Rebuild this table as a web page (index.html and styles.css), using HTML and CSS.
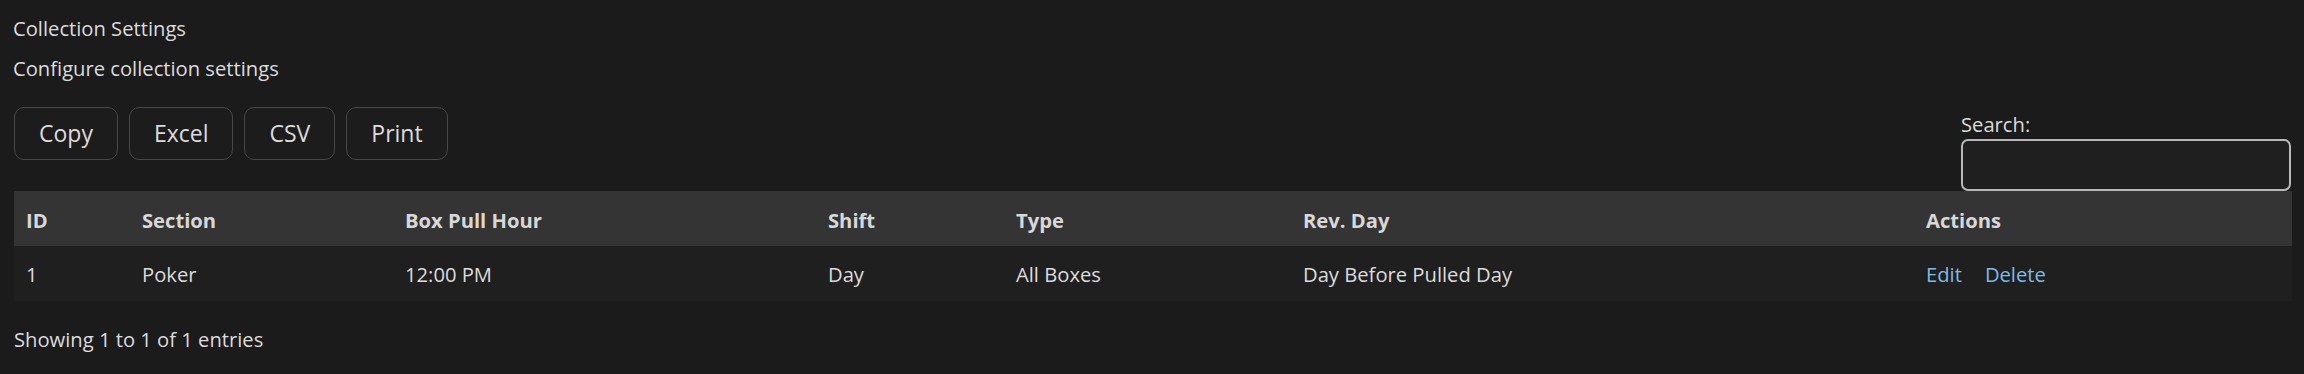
FILE: index.html
```html
<!DOCTYPE html>
<html lang="en">
<head>
<meta charset="utf-8">
<title>Collection Settings</title>
<link rel="stylesheet" href="styles.css">
</head>
<body>
<main class="page">
  <div class="title">Collection Settings</div>
  <div class="subtitle">Configure collection settings</div>

  <div class="toolbar">
    <div class="buttons">
      <button class="btn">Copy</button>
      <button class="btn">Excel</button>
      <button class="btn">CSV</button>
      <button class="btn">Print</button>
    </div>
    <label class="search">
      <span class="search-label">Search:</span>
      <input class="search-input" type="search">
    </label>
  </div>

  <table class="grid">
    <colgroup>
      <col class="c-id"><col class="c-section"><col class="c-hour"><col class="c-shift"><col class="c-type"><col class="c-rev"><col class="c-actions">
    </colgroup>
    <thead>
      <tr>
        <th>ID</th><th>Section</th><th>Box Pull Hour</th><th>Shift</th><th>Type</th><th>Rev. Day</th><th>Actions</th>
      </tr>
    </thead>
    <tbody>
      <tr>
        <td>1</td><td>Poker</td><td>12:00 PM</td><td>Day</td><td>All Boxes</td><td>Day Before Pulled Day</td>
        <td><a class="link link-edit" href="#">Edit</a><a class="link" href="#">Delete</a></td>
      </tr>
    </tbody>
  </table>

  <div class="info">Showing 1 to 1 of 1 entries</div>
</main>
</body>
</html>
```

FILE: styles.css
```css
html, body {
  margin: 0;
  padding: 0;
  background: #1b1b1b;
}

body {
  font-family: "Segoe UI", "Open Sans", "Noto Sans", sans-serif;
  font-size: 20.2px;
  line-height: 31.5px;
  color: #dcdcdc;
}

.page {
  padding: 12.5px 12px 0 14px;
}

.title {
  margin-left: -1px;
  margin-bottom: 8.5px;
}

.subtitle {
  margin-left: -1px;
  margin-bottom: 23px;
}

.toolbar {
  display: flex;
  justify-content: space-between;
  align-items: flex-start;
}

.buttons {
  display: flex;
  gap: 11px;
}

.btn {
  font-family: inherit;
  font-size: 23px;
  line-height: 33px;
  color: #dcdcdc;
  background: #1c1c1c;
  border: 1.5px solid #474747;
  border-radius: 10px;
  padding: 9px 24px;
  height: 53px;
  margin: 0;
}

.search {
  display: flex;
  flex-direction: column;
  width: 330px;
  margin-right: 1px;
  padding-top: 2px;
}

.search-label {
  display: block;
  line-height: 30px;
}

.search-input {
  box-sizing: border-box;
  width: 330px;
  height: 52px;
  margin: 0;
  background: #1f1f1f;
  border: 2px solid #b8b8b8;
  border-radius: 7px;
  outline: none;
}

.grid {
  width: 2278px;
  table-layout: fixed;
  border-collapse: collapse;
  border-spacing: 0;
}

.c-id { width: 116px; }
.c-section { width: 263px; }
.c-hour { width: 423px; }
.c-shift { width: 188px; }
.c-type { width: 287px; }
.c-rev { width: 623px; }
.c-actions { width: 378px; }

.grid th,
.grid td {
  text-align: left;
  padding: 0 12px;
  white-space: nowrap;
}

.grid thead tr {
  background: #343434;
  height: 55px;
}

.grid th {
  font-weight: 700;
  color: #d8d8d8;
  padding-top: 4px;
}

.grid tbody tr {
  background: #1f1f1f;
  height: 55px;
}

.grid td {
  padding-top: 2px;
}

.link {
  color: #7dbbe3;
  text-decoration: none;
}

.link-edit {
  margin-right: 23px;
}

.info {
  margin-top: 23px;
}
```
